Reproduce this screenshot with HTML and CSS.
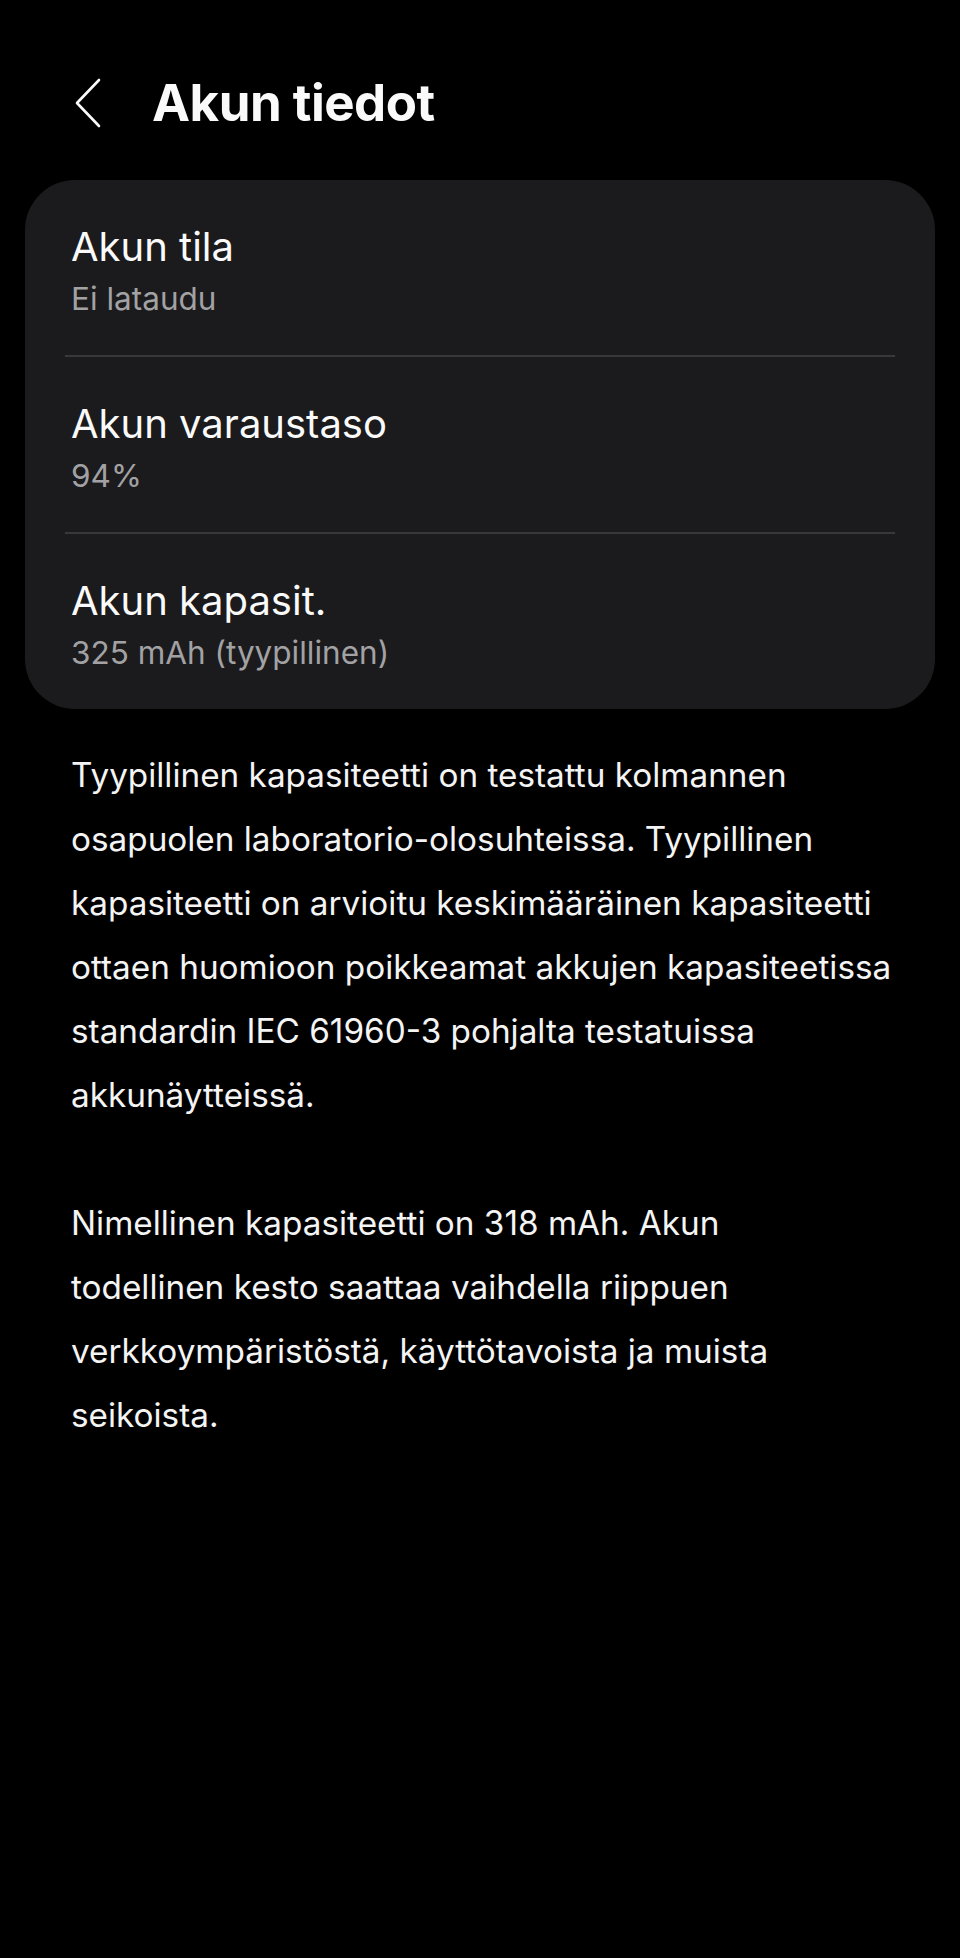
FILE: index.html
```html
<!DOCTYPE html>
<html lang="fi">
<head>
    <meta charset="UTF-8">
    <meta name="viewport" content="width=device-width, initial-scale=1.0">
    <title>Akun tiedot</title>
    <link rel="stylesheet" href="styles.css">
</head>
<body>
    <header class="top-bar">
        <button class="back" aria-label="Takaisin">
            <svg width="28" height="50" viewBox="0 0 28 50">
                <path d="M25 2 L3 25 L25 48" fill="none" stroke="#fafafa" stroke-width="2.6" stroke-linecap="round" stroke-linejoin="round"/>
            </svg>
        </button>
        <h1 class="title">Akun tiedot</h1>
    </header>

    <section class="card">
        <div class="row">
            <div class="row-title">Akun tila</div>
            <div class="row-sub">Ei lataudu</div>
        </div>
        <div class="divider"></div>
        <div class="row">
            <div class="row-title">Akun varaustaso</div>
            <div class="row-sub">94%</div>
        </div>
        <div class="divider"></div>
        <div class="row">
            <div class="row-title">Akun kapasit.</div>
            <div class="row-sub">325 mAh (tyypillinen)</div>
        </div>
    </section>

    <div class="info">
        <p>Tyypillinen kapasiteetti on testattu kolmannen<br>
        osapuolen laboratorio-olosuhteissa. Tyypillinen<br>
        kapasiteetti on arvioitu keskimääräinen kapasiteetti<br>
        ottaen huomioon poikkeamat akkujen kapasiteetissa<br>
        standardin IEC 61960-3 pohjalta testatuissa<br>
        akkunäytteissä.</p>
        <p>Nimellinen kapasiteetti on 318 mAh. Akun<br>
        todellinen kesto saattaa vaihdella riippuen<br>
        verkkoympäristöstä, käyttötavoista ja muista<br>
        seikoista.</p>
    </div>
</body>
</html>
```

FILE: styles.css
```css
body {
    margin: 0;
    background: #000;
    color: #fafafa;
    font-family: Inter, Roboto, "Noto Sans", sans-serif;
    min-height: 1958px;
}
.top-bar {
    display: flex;
    align-items: center;
    padding: 71px 0 0 74px;
    height: 64px;
}
.back {
    background: none;
    border: none;
    padding: 0;
    width: 28px;
    height: 50px;
    margin-right: 50px;
    display: flex;
}
.title {
    margin: 0;
    font-size: 51px;
    line-height: 64px;
    font-weight: 700;
    color: #fafafa;
    letter-spacing: -0.5px;
}
.card {
    margin: 45px 25px 0;
    background: #1b1b1d;
    border-radius: 50px;
}
.row {
    padding: 43px 46px 36px;
}
.row-title {
    font-size: 40px;
    line-height: 48px;
}
.row-sub {
    margin-top: 8px;
    font-size: 31.5px;
    line-height: 40px;
    color: #a2a2a4;
}
.divider {
    height: 2px;
    margin: 0 40px;
    background: #38383a;
}
.info {
    padding: 34px 40px 0 71px;
}
.info p {
    margin: 0 0 64px;
    font-size: 33.3px;
    line-height: 64px;
    color: #f4f4f4;
}
```
